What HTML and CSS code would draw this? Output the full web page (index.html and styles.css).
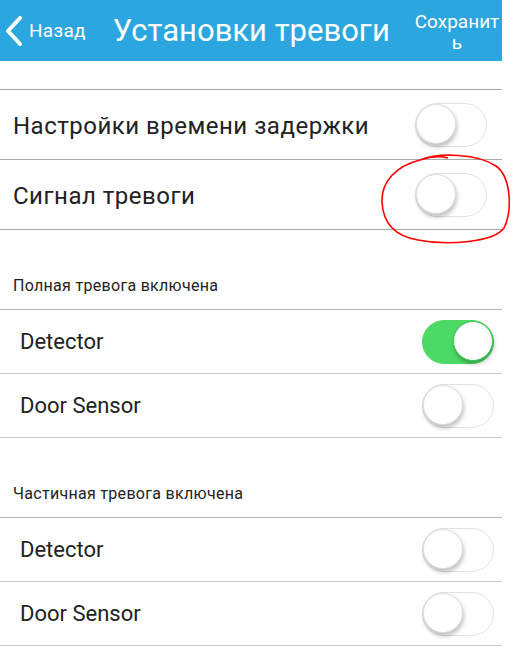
FILE: index.html
```html
<!DOCTYPE html>
<html lang="ru">
<head>
    <meta charset="UTF-8">
    <meta name="viewport" content="width=device-width, initial-scale=1.0">
    <title>Установки тревоги</title>
    <link rel="stylesheet" href="styles.css">
</head>
<body>
    <div class="screen">
        <!-- Top bar -->
        <div class="top-bar">
            <a href="#" class="back-link">
                <svg class="back-icon" width="20" height="30" viewBox="0 0 20 30">
                    <polyline points="16,2 4,15 16,28" fill="none" stroke="#fff" stroke-width="4" stroke-linecap="round" stroke-linejoin="round"/>
                </svg>
                <span>Назад</span>
            </a>
            <h1 class="title">Установки тревоги</h1>
            <a href="#" class="save-link">Сохранить</a>
        </div>

        <div class="spacer"></div>

        <div class="row row-big">
            <span class="row-label">Настройки времени задержки</span>
            <span class="toggle"></span>
        </div>
        <div class="row row-big">
            <span class="row-label">Сигнал тревоги</span>
            <span class="toggle"></span>
            <svg class="circle-mark" width="134" height="94" viewBox="0 0 134 94">
                <path d="M40 8 C60 0 98 2 116 14 C132 26 132 60 124 76 C114 90 68 94 38 88 C14 84 3 70 2 50 C1 30 16 14 40 8 C52 4 60 4 68 6" fill="none" stroke="#f00" stroke-width="1.6"/>
            </svg>
        </div>

        <div class="section-title">Полная тревога включена</div>
        <div class="row">
            <span class="row-label">Detector</span>
            <span class="toggle on"></span>
        </div>
        <div class="row">
            <span class="row-label">Door Sensor</span>
            <span class="toggle"></span>
        </div>

        <div class="section-title">Частичная тревога включена</div>
        <div class="row">
            <span class="row-label">Detector</span>
            <span class="toggle"></span>
        </div>
        <div class="row">
            <span class="row-label">Door Sensor</span>
            <span class="toggle"></span>
        </div>
    </div>
</body>
</html>
```

FILE: styles.css
```css
body {
    margin: 0;
    background-color: #fff;
    font-family: Roboto, "Noto Sans", sans-serif;
    color: #222;
}

.screen {
    width: 502px;
}

/* Top bar */
.top-bar {
    display: flex;
    align-items: center;
    height: 61px;
    background-color: #2ca6de;
    color: #fff;
}

.back-link {
    display: flex;
    align-items: center;
    margin-left: 4px;
    color: #fff;
    text-decoration: none;
    font-size: 19px;
    letter-spacing: 0.3px;
}

.back-icon {
    margin-right: 5px;
}

.title {
    margin: 0 0 0 27px;
    font-size: 31px;
    font-weight: normal;
    white-space: nowrap;
}

.save-link {
    width: 90px;
    margin-left: auto;
    margin-right: 0;
    margin-top: 2px;
    color: #fff;
    text-decoration: none;
    text-align: center;
    font-size: 19px;
    line-height: 21px;
    word-break: break-all;
}

.spacer {
    height: 28px;
    border-bottom: 1px solid #a9a9a9;
}

/* Rows */
.row {
    position: relative;
    display: flex;
    align-items: center;
    justify-content: space-between;
    height: 63px;
    padding: 0 8px 0 20px;
    border-bottom: 1px solid #c8c8c8;
}

.row-big {
    height: 69px;
    padding: 0 15px 0 13px;
    border-bottom-color: #a9a9a9;
}

.row-label {
    font-size: 22px;
}

.row-big .row-label {
    padding-top: 3px;
    font-size: 24px;
    letter-spacing: 0.5px;
}

.section-title {
    display: flex;
    align-items: flex-end;
    height: 65px;
    padding: 0 0 14px 13px;
    font-size: 16px;
    letter-spacing: 0.3px;
    border-bottom: 1px solid #b4b4b4;
}

/* iOS-style toggle */
.toggle {
    position: relative;
    width: 70px;
    height: 42px;
    border: 1px solid #e2e2e2;
    border-radius: 22px;
    background-color: #fff;
}

.toggle::after {
    content: "";
    position: absolute;
    top: 0;
    left: 0;
    width: 40px;
    height: 40px;
    border-radius: 50%;
    background-color: #fff;
    border: 1px solid #ddd;
    box-sizing: border-box;
    box-shadow: 1px 3px 4px rgba(0, 0, 0, 0.25);
}

.toggle.on {
    background-color: #4cd964;
    border-color: #4cd964;
}

.toggle.on::after {
    left: auto;
    right: 0;
    border-color: #3cc454;
}

.circle-mark {
    position: absolute;
    top: -8px;
    right: -12px;
}
```
